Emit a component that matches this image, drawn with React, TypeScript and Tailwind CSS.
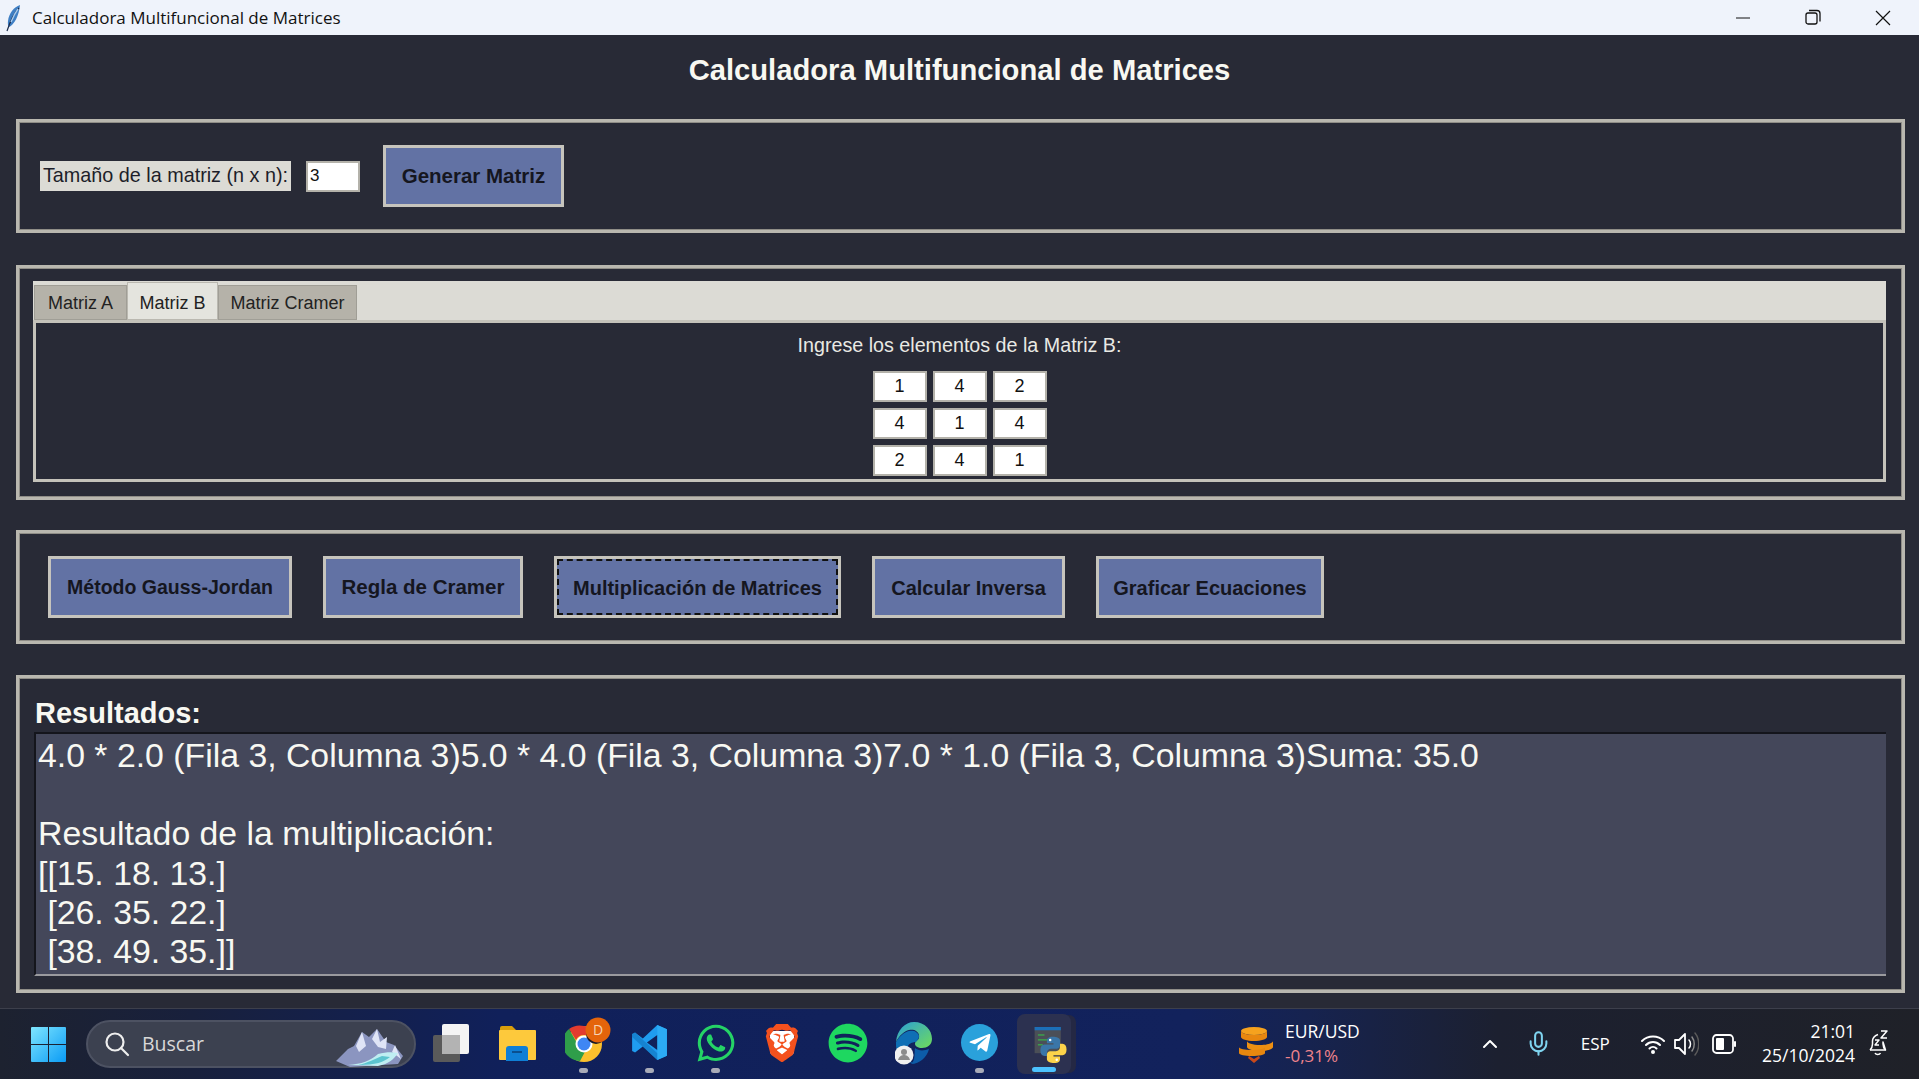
import { ChevronUp, Mic } from "lucide-react";
import { FaWhatsapp, FaSpotify, FaTelegramPlane } from "react-icons/fa";
import { SiBrave } from "react-icons/si";

const sans = "font-['Liberation_Sans',Arial,sans-serif]";
const ui = "font-['Open_Sans','Noto_Sans',sans-serif]";
const frame = "border-[3px] border-[#b9b7af] shadow-[inset_0_0_0_1px_#8f8d87]";
const btn = `flex items-center justify-center h-[62px] pt-[1px] bg-[#6272a4] border-[3px] border-[#c6c4bd] text-[#15161f] font-bold ${sans}`;

function Feather() {
  return (
    <svg width="16" height="28" viewBox="0 0 16 28" className="shrink-0">
      <path d="M14 1C8 3 3 9 2 17c-.4 3 0 5 1 6 5-2 10-11 11-22z" fill="#3f7fc4" />
      <path d="M13 4C9 8 5 15 1 27" stroke="#1c2b4a" strokeWidth="1.2" fill="none" />
      <path d="M12 5C9 9 7 13 5 18" stroke="#a9cdf0" strokeWidth="1.4" fill="none" />
    </svg>
  );
}

function Cell({ v }: { v: string }) {
  return (
    <div className={`w-[54px] h-[31px] bg-white border-2 border-[#b4b2aa] flex items-center justify-center text-[18px] text-[#111] ${sans}`}>
      {v}
    </div>
  );
}

function WinLogo() {
  return (
    <svg width="35" height="35" viewBox="0 0 35 35">
      <defs>
        <linearGradient id="wl" x1="0" y1="0" x2="1" y2="1">
          <stop offset="0" stopColor="#7fe6ff" />
          <stop offset="1" stopColor="#0a9bf5" />
        </linearGradient>
      </defs>
      <path d="M1 0h16v17H0V1a1 1 0 0 1 1-1zM18 0h16a1 1 0 0 1 1 1v16H18zM0 18h17v17H1a1 1 0 0 1-1-1zM18 18h17v16a1 1 0 0 1-1 1H18z" fill="url(#wl)" />
    </svg>
  );
}

function Mountain() {
  return (
    <svg width="72" height="42" viewBox="0 0 72 42">
      <path d="M0 36 12 24l6-3 8-14 7 5 8-8 9 13 8 3 9 11-5 8-48 3z" fill="#8b95c0" />
      <path d="M26 7l4 14-7 6-3-6zM41 4l3 13 7-5-1 12-8-2-6-8zM59 20l6 14-9-7z" fill="#dfe4f6" />
      <path d="M12 40c14-1 22-4 30-11 8-2 14-2 20-1-4 6-9 11-20 13z" fill="#bfeef2" />
      <path d="M22 40c10-2 16-6 24-9l8 1c-6 5-14 8-32 8z" fill="#5cc4cf" />
    </svg>
  );
}

function TaskView() {
  return (
    <svg width="37" height="38" viewBox="0 0 37 38">
      <rect x="0" y="11" width="27" height="27" rx="2" fill="#5a5a5a" />
      <rect x="9" y="0" width="27" height="30" rx="2" fill="#f4f4f4" />
      <rect x="9" y="11" width="18" height="19" fill="#b3b3b3" />
    </svg>
  );
}

function Explorer() {
  return (
    <svg width="37" height="36" viewBox="0 0 37 36">
      <path d="M1 3a2 2 0 0 1 2-2h10l4 4h-16z" fill="#d99e0b" />
      <rect x="0" y="5" width="37" height="30" rx="1" fill="#fdc93c" />
      <path d="M7 36V24a3 3 0 0 1 3-3h16a3 3 0 0 1 3 3v12z" fill="#0f7fd6" />
      <rect x="13" y="26" width="10" height="2" fill="#0a4f8f" />
    </svg>
  );
}

function Chrome() {
  return (
    <svg width="48" height="46" viewBox="0 0 48 46" className="ml-[10px] mt-[-6px]">
      <circle cx="19" cy="27" r="18" fill="#fbc02d" />
      <path d="M19 9a18 18 0 0 1 15.6 9H19a9 9 0 0 0-8 5L4 12A18 18 0 0 1 19 9z" fill="#e33b2e" />
      <path d="M4 12l8 14a8 8 0 0 0 10 5l-7 13A18 18 0 0 1 4 12z" fill="#2f9e4a" />
      <circle cx="19" cy="27" r="8.5" fill="#fff" />
      <circle cx="19" cy="27" r="6.5" fill="#3f86f4" />
      <circle cx="31" cy="17" r="10" fill="#16182a" />
      <circle cx="33" cy="13" r="12.5" fill="#e4640b" />
      <text x="33" y="18" textAnchor="middle" fontSize="14" fill="#f5d3b5" fontFamily="Open Sans, sans-serif">D</text>
    </svg>
  );
}

function VSCode() {
  return (
    <svg width="37" height="37" viewBox="0 0 100 100">
      <path d="M71 3 32 39 11 23 3 27v46l8 4 21-16 39 36 26-11V14zM72 29v42L43 50z" fill="#1f9cf0" />
      <path d="M71 3l26 11v72L71 97z" fill="#2cabf5" />
      <path d="M3 27l8-4 60 56v18L3 35z" fill="#0e6fb8" opacity=".55" />
    </svg>
  );
}

function Edge() {
  return (
    <svg width="37" height="44" viewBox="0 0 37 44">
      <defs>
        <linearGradient id="eg" x1="0" y1="0" x2="1" y2="1">
          <stop offset="0" stopColor="#2b9fd8" />
          <stop offset="1" stopColor="#6fdc5a" />
        </linearGradient>
      </defs>
      <path d="M1 21C2 9 10 1 19 1c11 0 18 8 18 17 0 6-5 9-10 9-4 0-7-2-7-4 0-4 5-3 4-9-1-4-5-6-10-5C9 10 4 15 1 21z" fill="url(#eg)" />
      <path d="M1 21c3-5 8-10 13-11 5-1 9 1 10 5 0 3-2 4-3 6-4 0-8 2-9 6-2 5 1 12 6 15C8 41 0 33 1 21z" fill="#0f6fb5" />
      <path d="M20 27c3 3 9 3 14 1-2 8-9 15-18 15 5-4 3-12 4-16z" fill="#0d5ca8" />
      <circle cx="9" cy="34" r="9.5" fill="#f0f0f0" />
      <circle cx="9" cy="31" r="3" fill="#8c8c8c" />
      <path d="M3 39c1-4 4-5 6-5s5 1 6 5z" fill="#8c8c8c" />
    </svg>
  );
}

function Python() {
  return (
    <svg width="34" height="36" viewBox="0 0 40 44">
      <rect x="0" y="0" width="32" height="32" fill="#4b4f57" />
      <rect x="0" y="0" width="32" height="4" fill="#1c6fb8" />
      <rect x="4" y="9" width="8" height="1.5" fill="#38b24a" />
      <rect x="4" y="15" width="14" height="1.5" fill="#38b24a" />
      <rect x="4" y="21" width="6" height="1.5" fill="#38b24a" />
      <path d="M22 12c-5 0-7 2-7 5v3h8v1.500H12c-3 0-5 2.500-5 7s2 7 5 7h3v-4c0-3 2-5 5-5h7c2 0 4-2 4-4v-6c0-3-4-4.500-9-4.500z" fill="#3a76a8" />
      <path d="M24 44c5 0 7-2 7-5v-3h-8v-1.500h11c3 0 5-2.500 5-7s-2-7-5-7h-3v4c0 3-2 5-5 5h-7c-2 0-4 2-4 4v6c0 3 4 4.500 9 4.500z" fill="#fcd34a" />
      <circle cx="19" cy="16" r="1.500" fill="#fff" />
      <circle cx="27" cy="40" r="1.500" fill="#fff" />
    </svg>
  );
}

function Coins() {
  return (
    <svg width="34" height="36" viewBox="0 0 34 36">
      <ellipse cx="15" cy="4" rx="13" ry="4" fill="#f6a21e" />
      <path d="M2 4v6c0 2 6 4 13 4s13-2 13-4V4c0 2-6 4-13 4S2 6 2 4z" fill="#e8870f" />
      <path d="M8 14v6c0 2 6 4 13 4s13-2 13-4v-6c0 2-6 4-13 4s-13-2-13-4z" fill="#ee8f12" />
      <path d="M0 20v6c0 2 6 3 13 3s13-1 13-3v-6c0 2-6 3-13 3S0 22 0 20z" fill="#e8870f" />
      <path d="M10 29l5 3 5-3 1 2-6 5-6-5z" fill="#c9491a" />
    </svg>
  );
}

function Wifi() {
  return (
    <svg width="24" height="20" viewBox="0 0 24 20" fill="none" stroke="#fff" strokeWidth="2" strokeLinecap="round">
      <path d="M1 7c6-6 16-6 22 0M5 11c4-4 10-4 14 0M8.500 14.500c2-2 5-2 7 0" />
      <circle cx="12" cy="18" r="1" fill="#fff" />
    </svg>
  );
}

function Volume() {
  return (
    <svg width="25" height="26" viewBox="0 0 25 26" fill="none" strokeLinecap="round">
      <path d="M1 9h4l6-6v20l-6-6H1z" stroke="#fff" strokeWidth="1.800" strokeLinejoin="round" />
      <path d="M15 9c2 2 2 6 0 8" stroke="#fff" strokeWidth="1.500" />
      <path d="M18 6c3 4 3 10 0 14" stroke="#8a8a8a" strokeWidth="1.500" />
      <path d="M21 2c5 6 5 16 0 22" stroke="#5a5a5a" strokeWidth="1.500" />
    </svg>
  );
}

function Battery() {
  return (
    <svg width="24" height="20" viewBox="0 0 24 20" fill="none">
      <rect x="1" y="1" width="20" height="18" rx="3.500" stroke="#fff" strokeWidth="1.800" />
      <rect x="4" y="4" width="8" height="12" rx="1" fill="#fff" />
      <rect x="22" y="7" width="2" height="6" rx="1" fill="#fff" />
    </svg>
  );
}

function Bell() {
  return (
    <svg width="22" height="28" viewBox="0 0 22 28" fill="none" stroke="#fff" strokeWidth="1.500" strokeLinejoin="round">
      <path d="M2 21c2-2 2.500-3 2.500-6v-3c0-3 1.500-5 5.500-6.500M15 13v2c0 3 .5 4 2.500 6z" />
      <path d="M2 21h15.500" />
      <path d="M7 24c1 2 4.500 2 5.500 0" />
      <path d="M7 11h4l-4 5h4" strokeWidth="1.400" />
      <path d="M13 2h6l-6 7h6" strokeWidth="1.500" />
    </svg>
  );
}

function Dot() {
  return <div className="w-[9px] h-[5px] rounded-full bg-[#a8abb8] mx-auto" />;
}

function TaskItem({ children, dot }: { children: React.ReactNode; dot?: boolean }) {
  return (
    <div className="w-[66px] h-[70px] flex flex-col items-center">
      <div className="h-[59px] w-full flex items-center justify-center pt-[8px] pl-[1px]">{children}</div>
      {dot && <Dot />}
    </div>
  );
}

export default function App() {
  return (
    <div className={`w-[1919px] h-[1079px] overflow-hidden flex flex-col bg-[#282a36] ${sans}`}>
      {/* title bar */}
      <div className="h-[35px] shrink-0 bg-[#eff3fb] flex items-center pl-[6px]">
        <Feather />
        <span className={`ml-[10px] text-[17px] text-[#111] ${ui}`}>Calculadora Multifuncional de Matrices</span>
        <div className="ml-auto flex items-center gap-[54px] pr-[28px]">
          <svg width="16" height="16" viewBox="0 0 16 16"><path d="M1 8h14" stroke="#111" strokeWidth="1" /></svg>
          <svg width="16" height="16" viewBox="0 0 16 16" fill="none" stroke="#111" strokeWidth="1.300" className="-mt-[2px]"><rect x="1" y="4" width="11" height="11" rx="2" /><path d="M4 1.500h8a3 3 0 0 1 3 3v8" /></svg>
          <svg width="16" height="16" viewBox="0 0 16 16"><path d="M1 1l14 14M15 1 1 15" stroke="#111" strokeWidth="1.200" /></svg>
        </div>
      </div>

      {/* window */}
      <div className="h-[974px] shrink-0 px-4 border-b border-[#3d3f4b]">
        <h1 className="h-[84px] pb-[13px] flex items-center justify-center text-[29.200px] font-bold text-[#f8f8f2]">
          Calculadora Multifuncional de Matrices
        </h1>

        <div className={`${frame} h-[114px] w-[1889px] flex items-center pl-[21px]`}>
          <div className="h-[30px] w-[251px] bg-[#dcdbd5] flex items-center justify-center text-[#1d1e29] text-[19.800px]">Tamaño de la matriz (n x n):</div>
          <div className="ml-[15px] h-[31px] w-[54px] bg-white border-2 border-[#b4b2aa] flex items-center pl-[2px] text-[17px] text-[#111]">3</div>
          <div className={`${btn} ml-[23px] w-[181px] text-[20.500px]`}>Generar Matriz</div>
        </div>

        <div className={`${frame} mt-[32px] h-[235px] w-[1889px] pl-[14px] pr-[16px] pt-[13px]`}>
          <div className="h-[39px] bg-[#dcdbd5] flex items-end pl-[1px]">
            <div className="h-[35px] w-[93px] pt-[2px] bg-[#b5b2a9] border border-[#a09e96] flex items-center justify-center text-[18px] text-[#222]">Matriz A</div>
            <div className="h-[38px] w-[91px] pt-[4px] bg-[#e4e4de] border border-[#bab8b0] flex items-center justify-center text-[18px] text-[#222]">Matriz B</div>
            <div className="h-[35px] w-[139px] pt-[2px] bg-[#b5b2a9] border border-[#a09e96] flex items-center justify-center text-[18px] text-[#222]">Matriz Cramer</div>
          </div>
          <div className="h-[162px] border-[3px] border-[#c4c2ba] flex flex-col items-center">
            <div className="h-[42px] pt-[4px] flex items-center text-[19.700px] text-[#e9e9e4]">Ingrese los elementos de la Matriz B:</div>
            <div className="grid grid-cols-[54px_54px_54px] gap-x-[6px] gap-y-[6px] mt-[6px]">
              {["1", "4", "2", "4", "1", "4", "2", "4", "1"].map((v, i) => (
                <Cell key={i} v={v} />
              ))}
            </div>
          </div>
        </div>

        <div className={`${frame} mt-[30px] h-[114px] w-[1889px] flex items-center pl-[29px]`}>
          <div className={`${btn} w-[244px] text-[19.500px]`}>Método Gauss-Jordan</div>
          <div className={`${btn} ml-[31px] w-[200px] text-[20.500px]`}>Regla de Cramer</div>
          <div className={`${btn} ml-[31px] w-[287px] text-[20px] outline-2 outline-dashed outline-offset-[-5px] outline-[#111]`}>Multiplicación de Matrices</div>
          <div className={`${btn} ml-[31px] w-[193px] text-[20px]`}>Calcular Inversa</div>
          <div className={`${btn} ml-[31px] w-[228px] text-[20px]`}>Graficar Ecuaciones</div>
        </div>

        <div className={`${frame} mt-[31px] h-[318px] w-[1889px] pl-[16px] pr-[15px] pt-[17px]`}>
          <div className="h-[37px] flex items-center text-[29px] font-bold text-[#f8f8f2]">Resultados:</div>
          <div className="ml-[-1px] h-[244px] w-[1852px] bg-[#44475a] border-t-2 border-l-2 border-t-[#14151c] border-l-[#14151c] border-b-2 border-b-[#9a9a9e] overflow-hidden pl-[2px] pt-[2px] text-[33.800px] leading-[39.200px] text-[#f8f8f2] whitespace-pre">
            {"4.0 * 2.0 (Fila 3, Columna 3)5.0 * 4.0 (Fila 3, Columna 3)7.0 * 1.0 (Fila 3, Columna 3)Suma: 35.0\n\nResultado de la multiplicación:\n[[15. 18. 13.]\n [26. 35. 22.]\n [38. 49. 35.]]"}
          </div>
        </div>
      </div>

      {/* taskbar */}
      <div className={`h-[70px] shrink-0 flex items-start text-white bg-[linear-gradient(90deg,#1d2230_0%,#18203c_10%,#10205a_26%,#12225c_62%,#162350_68%,#1c2030_78%,#1f2128_100%)] ${ui}`}>
        <div className="ml-[31px] mt-[18px]"><WinLogo /></div>
        <div className="ml-[20px] mt-[11px] w-[330px] h-[48px] rounded-full bg-[#3c4150] border-2 border-[#4d5262] flex items-center pl-[16px] relative">
          <svg width="26" height="26" viewBox="0 0 26 26" fill="none" stroke="#eee" strokeWidth="2.200"><circle cx="11" cy="11" r="8.500" /><path d="M17 17l7 7" strokeLinecap="round" /></svg>
          <span className="ml-[12px] text-[19.500px] text-[#d8d8d8]">Buscar</span>
          <div className="ml-auto mr-[6px] mt-[4px]"><Mountain /></div>
        </div>
        <div className="ml-[2px] flex items-start">
          <TaskItem><TaskView /></TaskItem>
          <TaskItem><Explorer /></TaskItem>
          <TaskItem dot><Chrome /></TaskItem>
          <TaskItem dot><VSCode /></TaskItem>
          <TaskItem dot><FaWhatsapp size={42} color="#25d366" /></TaskItem>
          <TaskItem>
            <div className="relative w-[38px] h-[38px]">
              <div className="absolute inset-[7px] bg-white rounded-[4px]" />
              <SiBrave size={38} color="#f4511e" className="relative" />
            </div>
          </TaskItem>
          <TaskItem><FaSpotify size={40} color="#1ed760" /></TaskItem>
          <TaskItem><Edge /></TaskItem>
          <TaskItem dot>
            <div className="w-[37px] h-[37px] rounded-full bg-[#2aa1db] flex items-center justify-center"><FaTelegramPlane size={24} color="#fff" /></div>
          </TaskItem>
          <div className="relative ml-[5px] mt-[5px] w-[54px] h-[60px] rounded-[8px] bg-[#2c3150] shadow-[6px_0_0_-1px_#242844] flex flex-col items-center">
            <div className="mt-[13px] ml-[14px]"><Python /></div>
            <div className="absolute bottom-[2px] w-[24px] h-[5px] rounded-full bg-[#4cc2ff]" />
          </div>
        </div>
        <div className="ml-[168px] mt-[18px]"><Coins /></div>
        <div className="ml-[12px] mt-[10px] leading-[24.500px]">
          <div className="text-[17.500px] text-white">EUR/USD</div>
          <div className="text-[17px] text-[#f0848c]">-0,31%</div>
        </div>
        <div className="ml-[118px] mt-[21px] flex items-center">
          <ChevronUp size={24} strokeWidth={2} color="#fff" />
          <div className="ml-[23px]"><Mic size={27} color="#7fd4f0" strokeWidth={1.800} /></div>
          <span className="ml-[29px] text-[17px]">ESP</span>
          <div className="ml-[31px]"><Wifi /></div>
          <div className="ml-[9px]"><Volume /></div>
          <div className="ml-[13px]"><Battery /></div>
        </div>
        <div className="ml-auto mt-[10px] text-right leading-[24px] text-[17.500px] mr-[13px]">
          <div>21:01</div>
          <div>25/10/2024</div>
        </div>
        <div className="mt-[20px] mr-[29px]"><Bell /></div>
      </div>
    </div>
  );
}
